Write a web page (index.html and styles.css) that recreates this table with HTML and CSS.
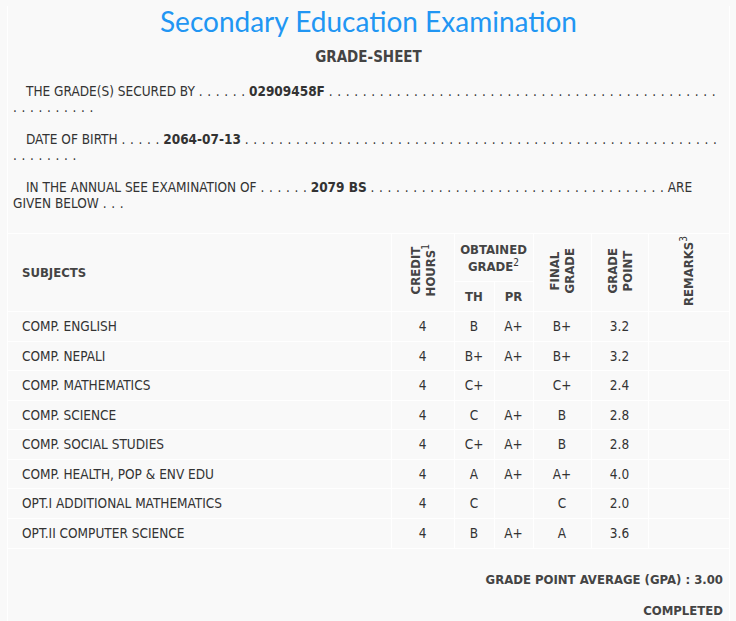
FILE: index.html
```html
<!DOCTYPE html>
<html>
<head>
<meta charset="utf-8">
<link rel="stylesheet" href="styles.css">
</head>
<body>
<div class="sheet">
  <h1 class="title">Secondary Education Examination</h1>
  <h2 class="subtitle">GRADE-SHEET</h2>
  <div class="lines">
    <p class="line">THE GRADE(S) SECURED BY <span class="dots">. . . . . .</span> <b>02909458F</b> <span class="dots">. . . . . . . . . . . . . . . . . . . . . . . . . . . . . . . . . . . . . . . . . . . . . . . . . . . . . . . .</span></p>
    <p class="line">DATE OF BIRTH <span class="dots">. . . . .</span> <b>2064-07-13</b> <span class="dots">. . . . . . . . . . . . . . . . . . . . . . . . . . . . . . . . . . . . . . . . . . . . . . . . . . . . . . . . . . . . . . . .</span></p>
    <p class="line">IN THE ANNUAL SEE EXAMINATION OF <span class="dots">. . . . . .</span> <b>2079 BS</b> <span class="dots">. . . . . . . . . . . . . . . . . . . . . . . . . . . . . . . . . . .</span> ARE GIVEN BELOW <span class="dots">. . .</span></p>
  </div>
  <table class="grades">
    <colgroup>
      <col class="c-subject">
      <col class="c-credit">
      <col class="c-th">
      <col class="c-pr">
      <col class="c-final">
      <col class="c-point">
      <col class="c-remarks">
    </colgroup>
    <thead>
      <tr class="hrow1">
        <th rowspan="2" class="subj">SUBJECTS</th>
        <th rowspan="2"><span class="vt">CREDIT<br>HOURS<sup>1</sup></span></th>
        <th colspan="2" class="obt">OBTAINED<br>GRADE<sup>2</sup></th>
        <th rowspan="2"><span class="vt">FINAL<br>GRADE</span></th>
        <th rowspan="2"><span class="vt">GRADE<br>POINT</span></th>
        <th rowspan="2"><span class="vt">REMARKS<sup>3</sup></span></th>
      </tr>
      <tr class="hrow2">
        <th>TH</th>
        <th>PR</th>
      </tr>
    </thead>
    <tbody>
      <tr><td class="subj">COMP. ENGLISH</td><td>4</td><td>B</td><td>A+</td><td>B+</td><td>3.2</td><td></td></tr>
      <tr><td class="subj">COMP. NEPALI</td><td>4</td><td>B+</td><td>A+</td><td>B+</td><td>3.2</td><td></td></tr>
      <tr><td class="subj">COMP. MATHEMATICS</td><td>4</td><td>C+</td><td></td><td>C+</td><td>2.4</td><td></td></tr>
      <tr><td class="subj">COMP. SCIENCE</td><td>4</td><td>C</td><td>A+</td><td>B</td><td>2.8</td><td></td></tr>
      <tr><td class="subj">COMP. SOCIAL STUDIES</td><td>4</td><td>C+</td><td>A+</td><td>B</td><td>2.8</td><td></td></tr>
      <tr><td class="subj">COMP. HEALTH, POP &amp; ENV EDU</td><td>4</td><td>A</td><td>A+</td><td>A+</td><td>4.0</td><td></td></tr>
      <tr><td class="subj">OPT.I ADDITIONAL MATHEMATICS</td><td>4</td><td>C</td><td></td><td>C</td><td>2.0</td><td></td></tr>
      <tr><td class="subj">OPT.II COMPUTER SCIENCE</td><td>4</td><td>B</td><td>A+</td><td>A</td><td>3.6</td><td></td></tr>
    </tbody>
  </table>
  <div class="summary">
    <p class="gpa">GRADE POINT AVERAGE (GPA) : 3.00</p>
    <p class="status">COMPLETED</p>
  </div>
</div>
</body>
</html>
```

FILE: styles.css
```css
body {
  margin: 0;
  background: #f9f9f9;
  font-family: "DejaVu Sans Condensed", "Liberation Sans", sans-serif;
  font-size: 13.5px;
  color: #333;
}

.sheet {
  margin: 0 6px 0 7px;
  border-left: 1px solid #fff;
  border-right: 1px solid #fff;
  min-height: 621px;
}

.title {
  margin: 6px 0 0;
  font-family: Lato, "Open Sans", sans-serif;
  font-weight: 400;
  font-size: 28px;
  line-height: 31px;
  color: #2196f3;
  text-align: center;
}

.subtitle {
  margin: 10px 0 0;
  font-size: 15px;
  font-weight: bold;
  line-height: 20px;
  text-align: center;
  color: #444;
}

.lines {
  margin-top: 16px;
}

.line {
  margin: 0 0 16px;
  padding-left: 5px;
  padding-right: 6px;
  text-indent: 13px;
  line-height: 16px;
}

.line b {
  color: #333;
}

.dots {
  word-spacing: 0.8px;
}

.grades {
  width: 100%;
  margin-top: 22px;
  border-collapse: collapse;
  table-layout: fixed;
}

.c-subject { width: 383px; }
.c-credit { width: 63px; }
.c-th { width: 40px; }
.c-pr { width: 39px; }
.c-final { width: 58px; }
.c-point { width: 57px; }
.c-remarks { width: 81px; }

.grades th,
.grades td {
  border: 1px solid #fff;
  text-align: center;
  vertical-align: middle;
}

.grades tr > :first-child { border-left: 0; }
.grades tr > :last-child { border-right: 0; }
.grades .hrow2 > th { border-left: 1px solid #fff; border-right: 1px solid #fff; }

.grades th {
  font-weight: bold;
  font-size: 13px;
  color: #444;
  padding: 0 2px;
  line-height: 17px;
}

.hrow1 > th { height: 47px; }
.hrow2 > th { height: 29px; }

.grades th.subj,
.grades td.subj {
  text-align: left;
  padding-left: 14px;
}

.grades td {
  padding: 5px 0;
  line-height: 18.57px;
}

.vt {
  display: inline-block;
  writing-mode: vertical-rl;
  transform: rotate(180deg);
  line-height: 15px;
  text-align: center;
}

sup {
  font-size: 10px;
  line-height: 0;
  vertical-align: 5px;
  font-weight: normal;
  color: #333;
}

.summary {
  padding: 0 6px 0 0;
  text-align: right;
  font-weight: bold;
  font-size: 13px;
  color: #444;
}

.summary p {
  margin: 0;
  line-height: 31px;
}

.gpa { padding-top: 15px; }
```
